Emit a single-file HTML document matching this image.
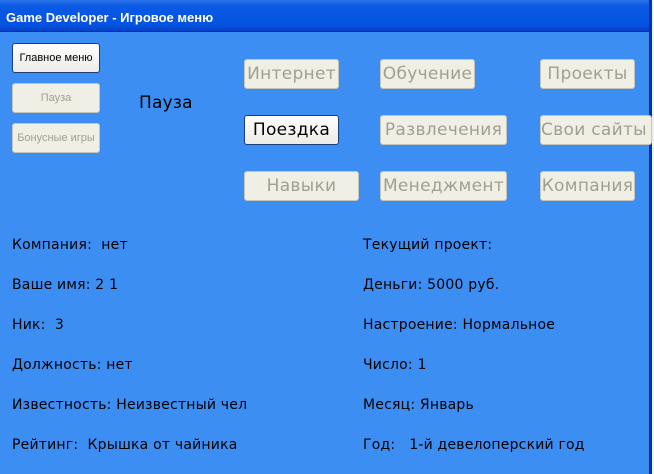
<!DOCTYPE html><html><head><style>
body{margin:0;width:654px;height:474px;overflow:hidden;background:#f0f0f0;font-family:"Liberation Sans",sans-serif;position:relative}
#win{position:absolute;left:0;top:0;width:649px;height:474px;background:#3c8ef3;border-right:3px solid #0831b0}
#tb{position:absolute;left:0;top:0;width:649px;height:32px;background:linear-gradient(#2b73ea,#0a5ae4 20%,#0553e1 80%,#0840c8);color:#fff;font-weight:bold;font-size:13px;line-height:36px;padding-left:6px;box-sizing:border-box;border-bottom:1px solid #0733a0}
.b{position:absolute;background:#efefe6;border:1px solid #c5c5b8;border-radius:3px;color:#a0a092;text-align:center;box-sizing:border-box;white-space:nowrap;overflow:hidden}
.s{font-size:11px;line-height:28px;height:30px;width:88px;left:12px}
.l{font-size:17px;line-height:28px;height:30px;font-family:"DejaVu Sans",sans-serif;letter-spacing:0.3px}
.a{border:1px solid #1c3e78;color:#000;background:linear-gradient(#fff,#ecebe6)}
.t{position:absolute;font-size:14px;color:#000;white-space:nowrap;font-family:"DejaVu Sans",sans-serif;letter-spacing:0.2px;margin-top:2px}
</style></head><body><div id="win">
<div id="tb">Game Developer - Игровое меню</div>
<div class="b s a" style="top:43px">Главное меню</div>
<div class="b s" style="top:83px">Пауза</div>
<div class="b s" style="top:123px">Бонусные игры</div>
<div class="t" style="left:139px;top:91px;font-size:17px">Пауза</div>
<div class="b l" style="left:244px;top:59px;width:95px">Интернет</div>
<div class="b l a" style="left:244px;top:115px;width:95px">Поездка</div>
<div class="b l" style="left:244px;top:171px;width:115px">Навыки</div>
<div class="b l" style="left:380px;top:59px;width:95px">Обучение</div>
<div class="b l" style="left:380px;top:115px;width:127px">Развлечения</div>
<div class="b l" style="left:380px;top:171px;width:127px">Менеджмент</div>
<div class="b l" style="left:540px;top:59px;width:95px">Проекты</div>
<div class="b l" style="left:540px;top:115px;width:112px;text-align:left">Свои сайты</div>
<div class="b l" style="left:540px;top:171px;width:95px">Компания</div>
<div class="t" style="left:12px;top:235px">Компания:&nbsp; нет</div>
<div class="t" style="left:12px;top:275px">Ваше имя: 2 1</div>
<div class="t" style="left:12px;top:315px">Ник:&nbsp; 3</div>
<div class="t" style="left:12px;top:355px">Должность: нет</div>
<div class="t" style="left:12px;top:395px">Известность: Неизвестный чел</div>
<div class="t" style="left:12px;top:435px">Рейтинг:&nbsp; Крышка от чайника</div>
<div class="t" style="left:363px;top:235px">Текущий проект:</div>
<div class="t" style="left:363px;top:275px">Деньги: 5000 руб.</div>
<div class="t" style="left:363px;top:315px">Настроение: Нормальное</div>
<div class="t" style="left:363px;top:355px">Число: 1</div>
<div class="t" style="left:363px;top:395px">Месяц: Январь</div>
<div class="t" style="left:363px;top:435px">Год:&nbsp;&nbsp; 1-й девелоперский год</div>
</div></body></html>
